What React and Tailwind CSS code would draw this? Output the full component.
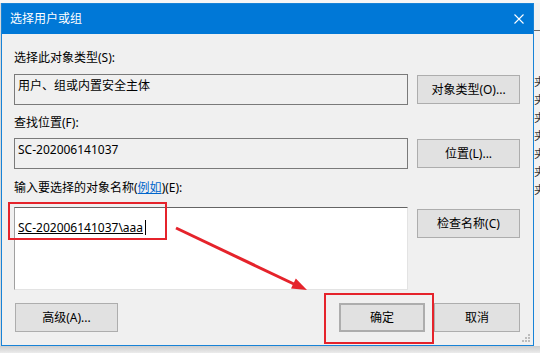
import React from "react";

const font = "font-['Noto_Sans','Noto_Sans_CJK_SC',sans-serif]";

function Btn({ children, className = "" }) {
  return (
    <button
      className={`h-[29px] border border-[#adadad] bg-[#e1e1e1] text-[12px] leading-4 text-black ${className}`}
    >
      {children}
    </button>
  );
}

function Label({ children }) {
  return <div className="h-4 text-[12px] leading-4 text-black">{children}</div>;
}

export default function App() {
  return (
    <div className={`relative flex h-[353px] w-[540px] flex-col overflow-hidden bg-[#f3f3f3] ${font}`}>
      {/* top strip */}
      <div className="h-[3px] bg-[#f6f6f6]" />

      <div className="flex h-[343px]">
        <div className="w-px bg-[#d8d8d8]" />

        {/* dialog window */}
        <div className="relative flex w-[533px] flex-col border border-[#1883d7]">
          {/* title bar */}
          <div className="flex h-[30px] items-center justify-between bg-[#0078d7] pl-[8px]">
            <span className="text-[12px] leading-4 text-white">选择用户或组</span>
            <svg width="10" height="10" viewBox="0 0 10 10" className="mr-[9px]">
              <path d="M0.5 0.5 L9.5 9.5 M9.5 0.5 L0.5 9.5" stroke="#fff" strokeWidth="1.1" />
            </svg>
          </div>

          {/* body */}
          <div className="flex flex-1 flex-col bg-[#f0f0f0] pl-[12px] pr-[13px] pt-[16px]">
            <Label>选择此对象类型(S):</Label>
            <div className="mt-2 flex items-center justify-between">
              <div className="h-[31px] w-[394px] border border-[#7a7a7a] px-[3px] pt-[3px] text-[12px] leading-4 text-black">
                用户、组或内置安全主体
              </div>
              <Btn className="w-[103px]">对象类型(O)...</Btn>
            </div>

            <div className="mt-[10px]">
              <Label>查找位置(F):</Label>
            </div>
            <div className="mt-[7px] flex items-center justify-between">
              <div className="h-[31px] w-[394px] border border-[#7a7a7a] px-[3px] pt-[3px] text-[12px] leading-4 text-black">
                SC-202006141037
              </div>
              <Btn className="w-[103px]">位置(L)...</Btn>
            </div>

            <div className="mt-[11px]">
              <Label>
                输入要选择的对象名称(
                <span className="text-[#0066cc] underline">例如</span>
                )(E):
              </Label>
            </div>
            <div className="mt-[11px] flex items-start justify-between">
              <div className="h-[83px] w-[394px] border border-b-[#e3e3e3] border-l-[#a0a0a0] border-r-[#e3e3e3] border-t-[#646464] bg-white px-[3px] pt-[9px] text-[12px] leading-4 text-black">
                <span className="underline">SC-202006141037\aaa</span>
                <span className="ml-[2px] inline-block h-[15px] w-px translate-y-[3px] bg-black" />
              </div>
              <Btn className="mt-[2px] w-[103px]">检查名称(C)</Btn>
            </div>

            <div className="mt-[13px] flex items-center justify-between">
              <Btn className="ml-px w-[103px]">高级(A)...</Btn>
              <div className="flex gap-[9px]">
                <Btn className="w-[86px] border-2 border-[#0078d7]">确定</Btn>
                <Btn className="w-[86px]">取消</Btn>
              </div>
            </div>
          </div>

          {/* resize grip */}
          <svg width="9" height="9" className="absolute bottom-[2px] right-[2px]">
            <g fill="#bcbcbc">
              <rect x="6" y="0" width="2" height="2" />
              <rect x="3" y="3" width="2" height="2" />
              <rect x="6" y="3" width="2" height="2" />
              <rect x="0" y="6" width="2" height="2" />
              <rect x="3" y="6" width="2" height="2" />
              <rect x="6" y="6" width="2" height="2" />
            </g>
          </svg>
        </div>

        {/* window behind, right edge */}
        <div className="flex flex-1 flex-col overflow-hidden bg-[#f2f2f2]">
          <div className="mt-[27px] h-px bg-[#6b6b6b]" />
          <div className="mt-[44px] flex flex-col gap-[4px] text-[11px] leading-[14px] text-[#333]">
            {Array.from({ length: 7 }).map((_, i) => (
              <span key={i} className="whitespace-nowrap">
                夹
              </span>
            ))}
          </div>
        </div>
      </div>

      {/* shadow */}
      <div className="flex-1 bg-gradient-to-b from-[#cdcdcd] to-[#ececec]" />

      {/* annotations */}
      <div className="absolute left-[8px] top-[202px] h-[38px] w-[159px] border-2 border-[#e5232b]" />
      <div className="absolute left-[324px] top-[293px] h-[51px] w-[110px] border-2 border-[#e5232b]" />
      <svg width="540" height="353" className="pointer-events-none absolute left-0 top-0">
        <line x1="176" y1="228" x2="296" y2="285" stroke="#e5232b" strokeWidth="3" />
        <polygon points="307,290 291,288.5 295.8,278.5" fill="#e5232b" />
      </svg>
    </div>
  );
}
